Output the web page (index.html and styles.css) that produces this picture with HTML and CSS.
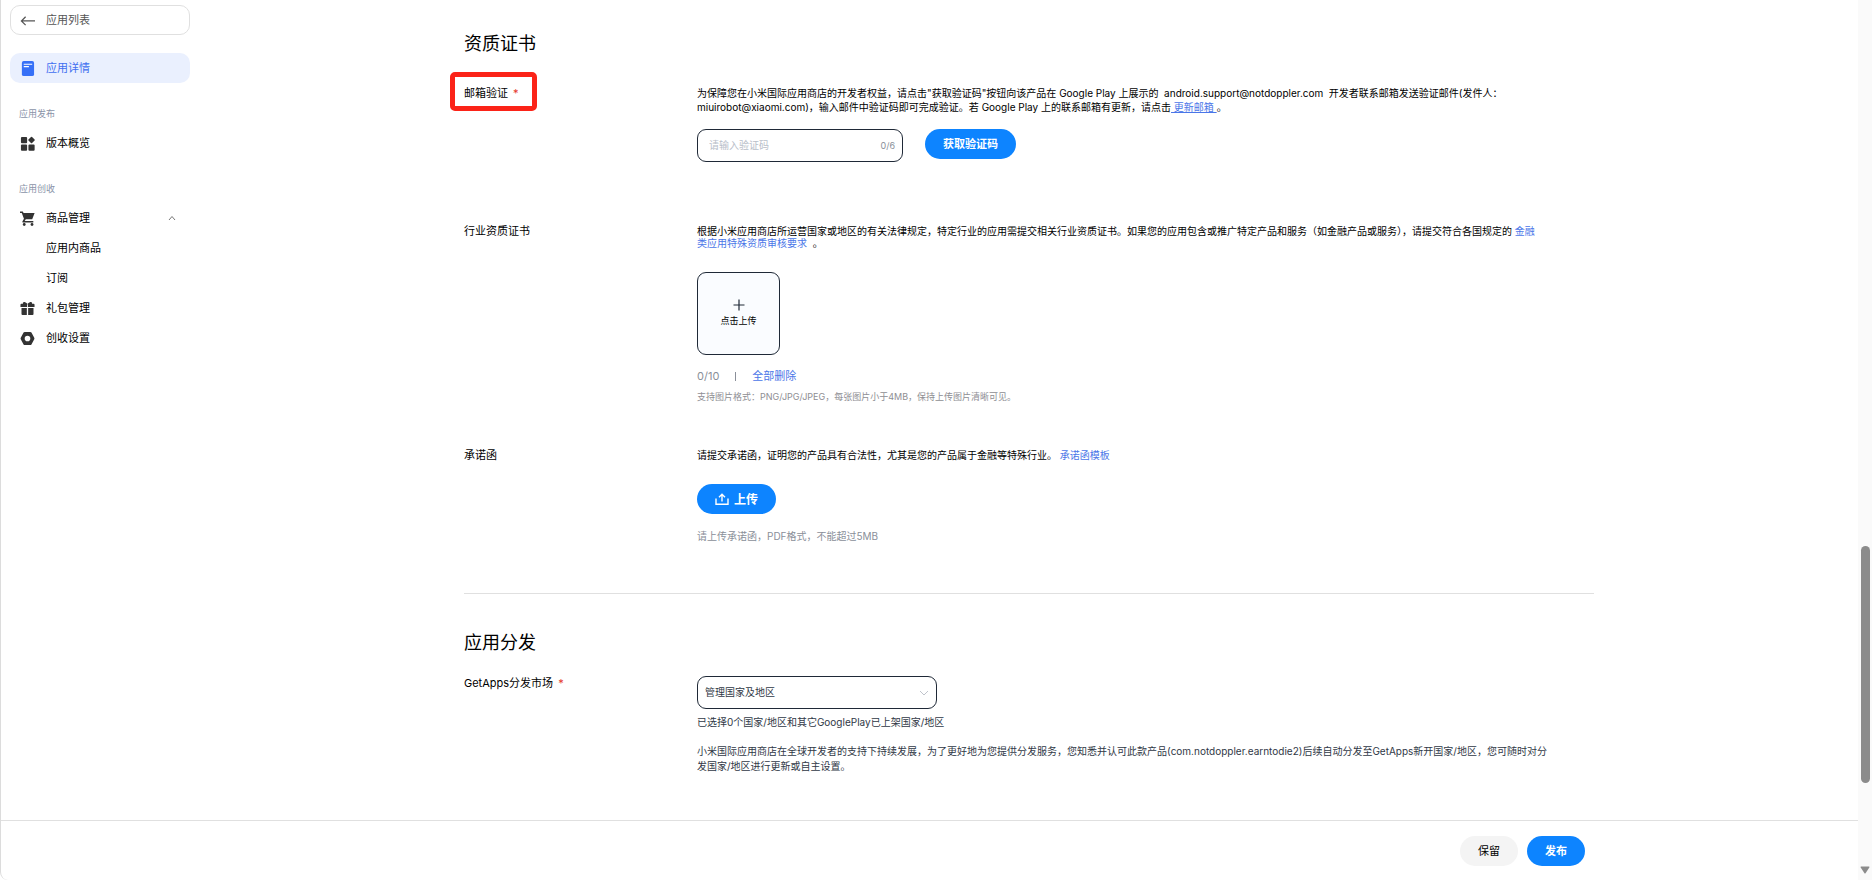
FILE: index.html
```html
<!DOCTYPE html>
<html lang="zh-CN">
<head>
<meta charset="UTF-8">
<meta name="viewport" content="width=device-width, initial-scale=1">
<title>应用详情</title>
<link rel="stylesheet" href="styles.css">
</head>
<body>
<div class="page">
	<div class="left">
		<div class="top">

			<!-- 左侧菜单 -->
			<nav class="sidebar">
				<a href="#" class="back">
					<svg class="icon" viewBox="0 0 16 16" fill="none" stroke="#555" stroke-width="1.3"><path d="M16 8.500H1.500M6 4L1.500 8.500L6 13"/></svg>
					应用列表
				</a>
				<a href="#" class="item active">
					<svg class="icon" viewBox="0 0 16 16"><rect x="2" y="0" width="13" height="16" rx="2" fill="#3670f7"/><path d="M4 3.500h9M4 6h5.500" stroke="#fff" stroke-width="1.200"/></svg>
					应用详情
				</a>

				<p class="caption">应用发布</p>
				<a href="#" class="item">
					<svg class="icon" viewBox="0 0 16 16" fill="#333"><rect x="1" y="1" width="6.600" height="6.600" rx="1"/><rect x="1" y="9" width="6.600" height="6.600" rx="1"/><rect x="9" y="9" width="6.600" height="6.600" rx="1"/><rect x="9.600" y="1.600" width="5.400" height="5.400" rx="0.800" transform="rotate(45 12.300 4.300)"/></svg>
					版本概览
				</a>

				<p class="caption">应用创收</p>
				<a href="#" class="item">
					<svg class="icon" viewBox="0 0 16 16" fill="#333"><path d="M0 0.500h3l0.800 1.700h11.800l-2.600 6.600H6.200L5 10.700h9.200v1.500H3.300c-0.800 0-1-0.800-0.600-1.400l1.500-2.500L1.900 2H0z"/><circle cx="4.500" cy="14.400" r="1.500"/><circle cx="12.800" cy="14.400" r="1.500"/></svg>
					商品管理
					<svg class="arrow" viewBox="0 0 8 8" fill="none" stroke="#777"><path d="M1 6L4 2.500L7 6"/></svg>
				</a>
				<a href="#" class="item sub">应用内商品</a>
				<a href="#" class="item sub">订阅</a>
				<a href="#" class="item">
					<svg class="icon" viewBox="0 0 16 16" fill="#333"><path d="M1.500 3h1.700C2.600 1.500 4 0.500 5.500 1.300C6.500 1.800 7.500 2.500 8 3.200C8.500 2.500 9.500 1.800 10.500 1.300C12 0.500 13.400 1.500 12.800 3h1.700q1 0 1 1v2.500h-15V4q0-1 1-1z"/><path d="M1.600 7.500h5.700v7.300H2.600q-1 0-1-1zM8.700 7.500h5.700v6.300q0 1-1 1H8.700z"/><path d="M8 3.500v11" stroke="#fff" stroke-width="0.900"/></svg>
					礼包管理
				</a>
				<a href="#" class="item">
					<svg class="icon" viewBox="0 0 16 16"><path d="M5 1h6q0.800 0 1.200 0.700l3 5.500q0.400 0.800 0 1.600l-3 5.500q-0.400 0.700-1.200 0.700H5q-0.800 0-1.200-0.700l-3-5.500q-0.400-0.800 0-1.600l3-5.500Q4.200 1 5 1zM8 5a3 3 0 1 0 0 6a3 3 0 1 0 0-6z" fill="#333" fill-rule="evenodd"/></svg>
					创收设置
				</a>
			</nav>

			<main class="main">
				<form class="inner" id="appForm">

					<!-- 资质证书 -->
					<section class="section">
						<h2>资质证书</h2>

						<div class="row">
							<label class="label marked" for="txtCode">邮箱验证 <span class="must">*</span></label>
							<div class="field">
								<p class="desc close">为保障您在小米国际应用商店的开发者权益，请点击"获取验证码"按钮向该产品在 Google Play 上展示的&nbsp; android.support@notdoppler.com&nbsp; 开发者联系邮箱发送验证邮件(发件人：<br>miuirobot@xiaomi.com)，输入邮件中验证码即可完成验证。若 Google Play 上的联系邮箱有更新，请点击<a href="#" class="under">&nbsp;更新邮箱&nbsp;</a>。</p>
								<div class="code-line">
									<div class="code-box">
										<input type="text" id="txtCode" maxlength="6" placeholder="请输入验证码">
										<span class="count">0/6</span>
									</div>
									<button type="button" class="btn primary">获取验证码</button>
								</div>
							</div>
						</div>

						<div class="row industry">
							<span class="label">行业资质证书</span>
							<div class="field">
								<p class="desc tight">根据小米应用商店所运营国家或地区的有关法律规定，特定行业的应用需提交相关行业资质证书。如果您的应用包含或推广特定产品和服务（如金融产品或服务），请提交符合各国规定的 <a href="#">金融<br>类应用特殊资质审核要求</a>&nbsp; 。</p>
								<button type="button" class="upload-box">
									<svg class="plus" viewBox="0 0 12 12" stroke="#1f2937" stroke-width="1.200"><path d="M6 0.500v11M0.500 6h11"/></svg>
									点击上传
								</button>
								<p class="total"><span>0/10</span><i class="bar"></i><a href="#">全部删除</a></p>
								<p class="hint">支持图片格式：PNG/JPG/JPEG，每张图片小于4MB，保持上传图片清晰可见。</p>
							</div>
						</div>

						<div class="row promise">
							<span class="label">承诺函</span>
							<div class="field">
								<p class="desc">请提交承诺函，证明您的产品具有合法性，尤其是您的产品属于金融等特殊行业。 <a href="#">承诺函模板</a></p>
								<button type="button" class="btn primary upload">
									<svg class="up" viewBox="0 0 14 12" fill="none" stroke="#fff" stroke-width="1.400"><path d="M1 5.500v5.700h12V5.500M7 8.500V1.500M4 4.200L7 1.300L10 4.200"/></svg>
									上传
								</button>
								<p class="note">请上传承诺函，PDF格式，不能超过5MB</p>
							</div>
						</div>
					</section>

					<!-- 应用分发 -->
					<section class="section market">
						<h2>应用分发</h2>
						<div class="row">
							<label class="label" for="selMarket">GetApps分发市场 <span class="must">*</span></label>
							<div class="field">
								<div class="select-box">
									<select id="selMarket"><option>管理国家及地区</option></select>
									<svg class="down" viewBox="0 0 10 10" fill="none" stroke="#c0c4cc"><path d="M1 3L5 7L9 3"/></svg>
								</div>
								<p class="desc dark picked">已选择0个国家/地区和其它GooglePlay已上架国家/地区</p>
								<p class="desc dark">小米国际应用商店在全球开发者的支持下持续发展，为了更好地为您提供分发服务，您知悉并认可此款产品(com.notdoppler.earntodie2)后续自动分发至GetApps新开国家/地区，您可随时对分<br>发国家/地区进行更新或自主设置。</p>
							</div>
						</div>
					</section>
				</form>
			</main>
		</div>

		<footer class="footer">
			<div class="inner actions">
				<button type="button" class="btn plain">保留</button>
				<button type="submit" form="appForm" class="btn primary">发布</button>
			</div>
		</footer>
	</div>

	<!-- 滚动条 -->
	<div class="scroll">
		<div class="thumb"></div>
		<svg class="scroll-down" viewBox="0 0 10 8" fill="#8b8b8b"><path d="M1.200 0.500h7.600q1 0 0.500 1L5.700 7Q5 8 4.300 7L0.700 1.500q-0.500-1 0.500-1z"/></svg>
	</div>
</div>
</body>
</html>
```
FILE: styles.css
```css
*, *::before {box-sizing: border-box;}
body {margin: 0; background-color: #fff; color: #000; font-family: Inter, "Noto Sans CJK SC", sans-serif; font-size: 10px; line-height: 15px;}
h2, p {margin: 0; font-weight: normal;}
a {color: #4a76e8; text-decoration: none;}
button, input, select {font-family: inherit; font-size: inherit; line-height: inherit;}
button {cursor: pointer;}
svg {display: block; flex: none;}

.page {display: flex; height: 100vh; border-left: 1px solid #dcdcdc; border-bottom-left-radius: 8px; overflow: hidden;}
.left {display: flex; flex: 1; flex-direction: column; min-width: 0;}
.top {display: flex; flex: 1; min-height: 0;}

/* 左侧菜单 */
.sidebar {width: 199px; flex: none; padding: 5px 10px 0 9px;}
.sidebar a {display: flex; align-items: center; height: 30px; padding: 0 14px 0 10px; border-radius: 10px; color: #000; font-size: 11px;}
.sidebar .back {margin-bottom: 18px; padding-left: 9px; border: 1px solid #e0e0e0; color: #555;}
.sidebar .active {background-color: #eaf0fe; color: #3f6ff0;}
.sidebar .sub {padding-left: 36px;}
.icon {width: 15px; height: 15px; margin-right: 11px;}
.arrow {width: 8px; height: 8px; margin-left: auto;}
.caption {margin: 23px 0 7px 9px; color: #8a93a8; font-size: 9px;}

/* 内容 */
.main {flex: 1; min-width: 0; overflow: hidden;}
.inner {max-width: 1130px; margin: 0 auto;}
.section {padding: 32px 0 49px; border-bottom: 1px solid #e0e0e0;}
.section h2 {margin-bottom: 30px; font-size: 18px; line-height: 24px;}
.row {display: flex;}
.label {position: relative; width: 233px; flex: none; align-self: flex-start; font-size: 11px;}
.must {margin-left: 2px; color: #e5352b;}
.field {flex: 1; min-width: 0;}
.field .dark {color: #303846;}
.under {text-decoration: underline;}

/* 邮箱验证 红框 */
.marked::before {content: ""; position: absolute; top: -14px; left: -14px; width: 87px; height: 39px; border: 5px solid #fb2318; border-radius: 5px;}

.close {line-height: 14px;}
.code-line {display: flex; gap: 22px; margin-top: 15px;}
.code-box {display: flex; align-items: center; width: 206px; height: 33px; padding: 0 7px 0 11px; border: 1px solid #1f2937; border-radius: 9px;}
.code-box input {flex: 1; min-width: 0; padding: 0; border: 0; outline: none; background: none;}
.code-box input::placeholder {color: #b8bec9;}
.count {color: #8a8f99; font-size: 9px;}

.btn {height: 30px; padding: 0 18px; border: 0; border-radius: 15px; font-size: 11px;}
.primary {background-color: #0d84ff; color: #fff; font-weight: 700;}
.plain {background-color: #f4f4f4; color: #000;}

.industry {margin-top: 62px;}
.tight {line-height: 12px;}
.industry .desc {margin-top: 1px;}
.upload-box {display: flex; flex-direction: column; align-items: center; justify-content: center; gap: 2px; width: 83px; height: 83px; margin-top: 23px; padding: 0; border: 1px solid #1f2937; border-radius: 9px; background-color: #fafcff; color: #000; font-size: 9px;}
.plus {width: 12px; height: 12px;}
.total {display: flex; align-items: center; gap: 16px; margin-top: 14px; color: #8a8f99; font-size: 11px;}
.bar {width: 1px; height: 9px; background-color: #8a8f99;}
.hint {margin-top: 7px; color: #8e8e93; font-size: 9px; line-height: 12px;}

.promise {margin-top: 45px;}
.upload {display: flex; align-items: center; gap: 5px; margin-top: 21px; font-size: 12px;}
.up {width: 14px; height: 12px;}
.note {margin-top: 15px; color: #8a8f99;}

/* 应用分发 */
.market {padding: 37px 0 0; border-bottom: 0;}
.market h2 {margin-bottom: 21px;}
.select-box {display: flex; align-items: center; width: 240px; height: 33px; padding-right: 7px; border: 1px solid #1f2937; border-radius: 9px;}
.select-box select {flex: 1; height: 100%; padding: 0 7px; border: 0; outline: none; background: none; appearance: none; color: #303846;}
.down {width: 10px; height: 10px;}
.picked {margin: 6px 0 14px;}

.footer {flex: none; height: 60px; padding: 15px 0 0 199px; border-top: 1px solid #e0e0e0;}
.actions {display: flex; justify-content: flex-end; gap: 9px; padding-right: 9px;}

/* 滚动条 */
.scroll {display: flex; flex-direction: column; align-items: center; justify-content: space-between; width: 14px; flex: none; padding: 62vh 0 6px; background-color: #fafafa;}
.thumb {width: 9px; height: 27vh; border-radius: 5px; background-color: #8b8b8b;}
.scroll-down {width: 10px; height: 8px;}
```
